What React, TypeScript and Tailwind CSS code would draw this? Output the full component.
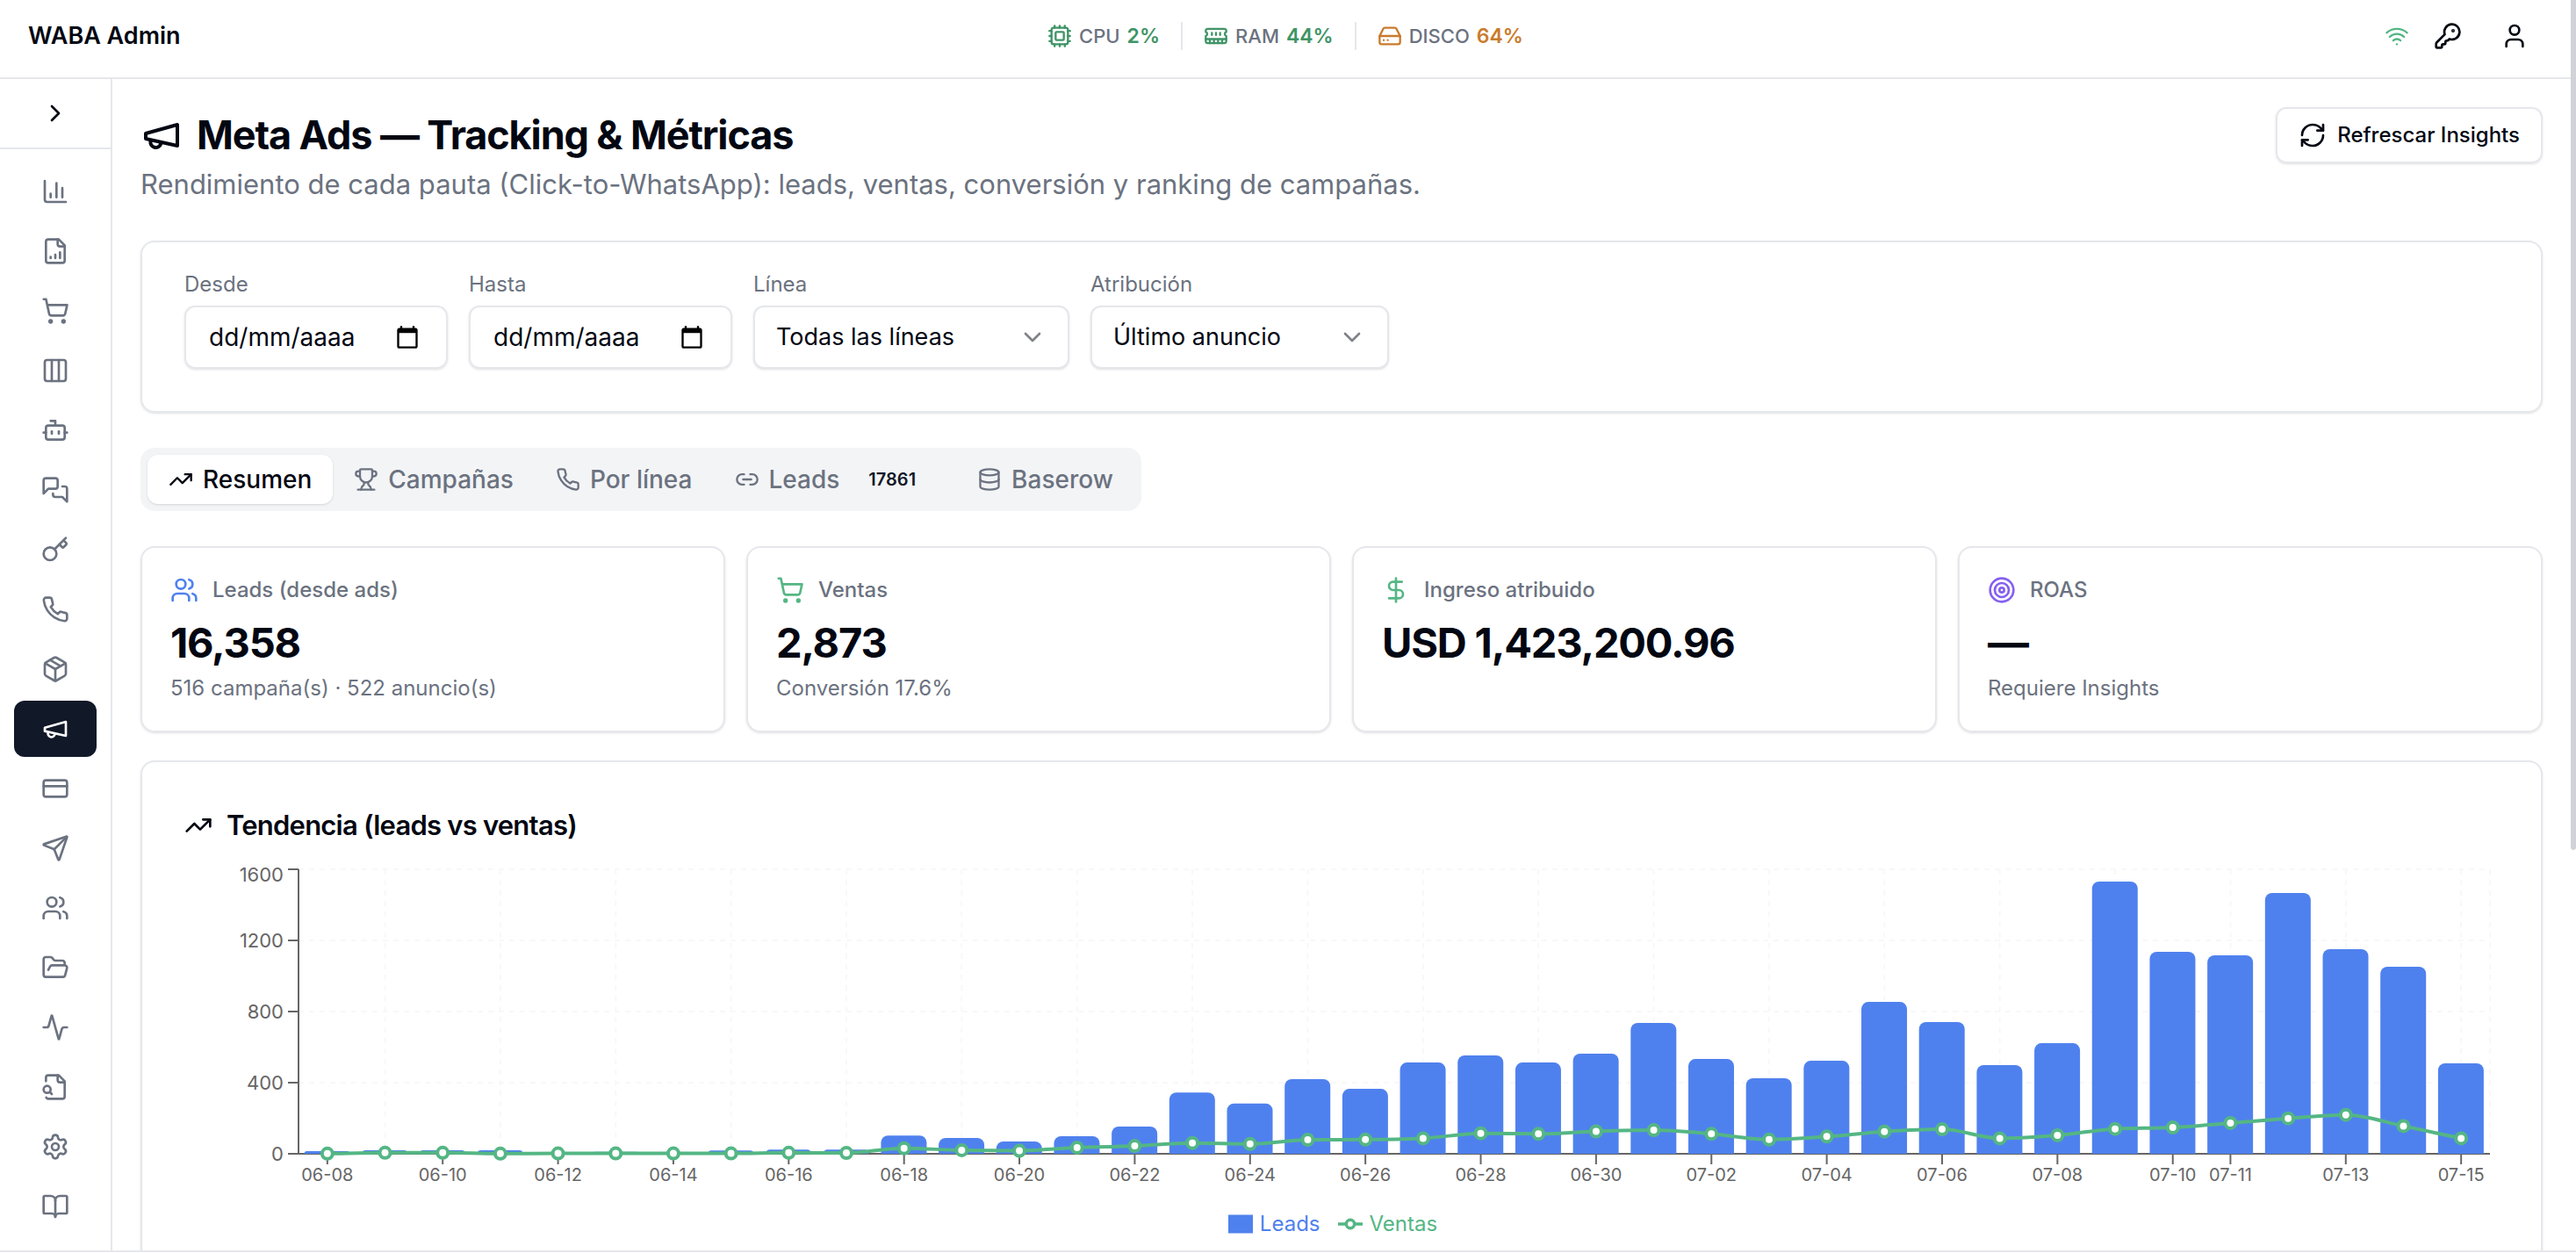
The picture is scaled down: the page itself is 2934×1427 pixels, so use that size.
import type { ComponentType, ReactNode } from "react";
import {
  Activity,
  BookOpen,
  Bot,
  ChartColumn,
  ChevronDown,
  ChevronRight,
  Columns3,
  Cpu,
  CreditCard,
  Database,
  DollarSign,
  FolderOpen,
  HardDrive,
  KeyRound,
  Link2,
  Package,
  RefreshCw,
  Send,
  Settings,
  ShoppingCart,
  Target,
  TrendingUp,
  Trophy,
  User,
  Users,
  Wifi,
} from "lucide-react";

type IconType = ComponentType<{ className?: string }>;

// iconos con trazo propio (24x24)
function Glyph({ className, children }: { className?: string; children: ReactNode }) {
  return (
    <svg
      viewBox="0 0 24 24"
      fill="none"
      stroke="currentColor"
      strokeWidth="2"
      strokeLinecap="round"
      strokeLinejoin="round"
      className={className}
      aria-hidden="true"
    >
      {children}
    </svg>
  );
}

const Megaphone: IconType = ({ className }) => (
  <Glyph className={className}>
    <path d="m3 11 18-5v12L3 14v-3z" />
    <path d="M11.6 16.8a3 3 0 1 1-5.8-1.6" />
  </Glyph>
);

const Key: IconType = ({ className }) => (
  <Glyph className={className}>
    <path d="m15.5 7.5 2.3 2.3a1 1 0 0 0 1.4 0l2.1-2.1a1 1 0 0 0 0-1.4L19 4" />
    <path d="m21 2-9.6 9.6" />
    <circle cx="7.5" cy="15.5" r="5.5" />
  </Glyph>
);

const MemoryStick: IconType = ({ className }) => (
  <Glyph className={className}>
    <path d="M6 19v-3M10 19v-3M14 19v-3M18 19v-3M8 11V9M16 11V9M12 11V9M2 15h20" />
    <path d="M2 7a2 2 0 0 1 2-2h16a2 2 0 0 1 2 2v1.1a2 2 0 0 0 0 3.837V17a2 2 0 0 1-2 2H4a2 2 0 0 1-2-2v-5.1a2 2 0 0 0 0-3.837Z" />
  </Glyph>
);

const Messages: IconType = ({ className }) => (
  <Glyph className={className}>
    <path d="M14 9a2 2 0 0 1-2 2H6l-4 4V4a2 2 0 0 1 2-2h8a2 2 0 0 1 2 2z" />
    <path d="M18 9h2a2 2 0 0 1 2 2v11l-4-4h-6a2 2 0 0 1-2-2v-1" />
  </Glyph>
);

const Phone: IconType = ({ className }) => (
  <Glyph className={className}>
    <path d="M22 16.92v3a2 2 0 0 1-2.18 2 19.79 19.79 0 0 1-8.63-3.07 19.5 19.5 0 0 1-6-6 19.79 19.79 0 0 1-3.07-8.67A2 2 0 0 1 4.11 2h3a2 2 0 0 1 2 1.72 12.84 12.84 0 0 0 .7 2.81 2 2 0 0 1-.45 2.11L8.09 9.91a16 16 0 0 0 6 6l1.27-1.27a2 2 0 0 1 2.11-.45 12.84 12.84 0 0 0 2.81.7A2 2 0 0 1 22 16.92z" />
  </Glyph>
);

const FileChart: IconType = ({ className }) => (
  <Glyph className={className}>
    <path d="M15 2H6a2 2 0 0 0-2 2v16a2 2 0 0 0 2 2h12a2 2 0 0 0 2-2V7Z" />
    <path d="M14 2v4a2 2 0 0 0 2 2h4M8 18v-1M12 18v-3M16 18v-5" />
  </Glyph>
);

const FileSearch: IconType = ({ className }) => (
  <Glyph className={className}>
    <path d="M14 2v4a2 2 0 0 0 2 2h4" />
    <path d="M4.268 21a2 2 0 0 0 1.727 1H18a2 2 0 0 0 2-2V7l-5-5H6a2 2 0 0 0-2 2v3" />
    <path d="m9 18-1.5-1.5" />
    <circle cx="5" cy="14" r="3" />
  </Glyph>
);

const CalendarPicker: IconType = ({ className }) => (
  <svg viewBox="0 0 24 24" className={className} fill="currentColor" aria-hidden="true">
    <path d="M20 3h-1V1h-2v2H7V1H5v2H4c-1.1 0-2 .9-2 2v16c0 1.1.9 2 2 2h16c1.1 0 2-.9 2-2V5c0-1.1-.9-2-2-2zm0 18H4V8h16v13z" />
  </svg>
);

const NAV: { label: string; icon: IconType }[] = [
  { label: "Dashboard", icon: ChartColumn },
  { label: "Reportes", icon: FileChart },
  { label: "Pedidos", icon: ShoppingCart },
  { label: "Kanban", icon: Columns3 },
  { label: "Bots", icon: Bot },
  { label: "Conversaciones", icon: Messages },
  { label: "Credenciales", icon: Key },
  { label: "Líneas", icon: Phone },
  { label: "Productos", icon: Package },
  { label: "Meta Ads", icon: Megaphone },
  { label: "Pagos", icon: CreditCard },
  { label: "Envíos", icon: Send },
  { label: "Usuarios", icon: Users },
  { label: "Archivos", icon: FolderOpen },
  { label: "Actividad", icon: Activity },
  { label: "Auditoría", icon: FileSearch },
  { label: "Ajustes", icon: Settings },
  { label: "Documentación", icon: BookOpen },
];

const STATS = [
  { label: "CPU", value: "2%", icon: Cpu, tone: "text-[#3f9467]" },
  { label: "RAM", value: "44%", icon: MemoryStick, tone: "text-[#3f9467]" },
  { label: "DISCO", value: "64%", icon: HardDrive, tone: "text-[#c97b2c]" },
];

const KPIS = [
  { label: "Leads (desde ads)", value: "16,358", note: "516 campaña(s) · 522 anuncio(s)", icon: Users, tone: "text-[#4f81ee]" },
  { label: "Ventas", value: "2,873", note: "Conversión 17.6%", icon: ShoppingCart, tone: "text-[#54b684]" },
  { label: "Ingreso atribuido", value: "USD 1,423,200.96", note: "", icon: DollarSign, tone: "text-[#54b684]" },
  { label: "ROAS", value: "—", note: "Requiere Insights", icon: Target, tone: "text-[#8560ee]" },
];

const DAYS = [
  "06-08", "06-09", "06-10", "06-11", "06-12", "06-13", "06-14", "06-15", "06-16", "06-17",
  "06-18", "06-19", "06-20", "06-21", "06-22", "06-23", "06-24", "06-25", "06-26", "06-27",
  "06-28", "06-29", "06-30", "07-01", "07-02", "07-03", "07-04", "07-05", "07-06", "07-07",
  "07-08", "07-09", "07-10", "07-11", "07-12", "07-13", "07-14", "07-15",
];
const LEADS = [
  15, 20, 20, 20, 10, 11, 10, 19, 24, 24, 103, 89, 69, 99, 153, 345, 283, 420, 365, 513, 553, 513,
  563, 736, 533, 425, 523, 854, 741, 499, 622, 1531, 1136, 1116, 1467, 1151, 1052, 509,
];
const SALES = [
  1, 6, 6, 1, 2, 2, 2, 2, 6, 5, 31, 20, 17, 35, 44, 61, 55, 79, 80, 87, 115, 112, 126, 133, 112,
  80, 97, 125, 138, 87, 104, 140, 148, 173, 199, 219, 156, 87,
];

// área del gráfico
const W = 2636;
const H = 398;
const LEFT = 130;
const RIGHT = 2626;
const TOP = 10;
const BASE = 334;
const MAX = 1600;
const STEP = (RIGHT - LEFT) / DAYS.length;

const xAt = (i: number) => LEFT + STEP * (i + 0.5);
const yAt = (v: number) => BASE - (v / MAX) * (BASE - TOP);

function barPath(i: number, v: number) {
  const x = LEFT + STEP * (i + 0.1);
  const y = yAt(v);
  const w = 52;
  const r = Math.min(8, BASE - y);
  return `M${x},${y + r}A${r},${r},0,0,1,${x + r},${y}H${x + w - r}A${r},${r},0,0,1,${x + w},${y + r}V${BASE}H${x}Z`;
}

// curva monótona en x
function monotone(points: [number, number][]) {
  const n = points.length;
  const slope = points
    .slice(1)
    .map((p, i) => (p[1] - points[i][1]) / (p[0] - points[i][0]));
  const tangent = points.map((_, i) => {
    if (i === 0) return slope[0];
    if (i === n - 1) return slope[n - 2];
    const a = slope[i - 1];
    const b = slope[i];
    if (a * b <= 0) return 0;
    return Math.sign(a) * Math.min(Math.abs(a), Math.abs(b), Math.abs(a + b) / 4) * 2;
  });
  let d = `M${points[0][0]},${points[0][1]}`;
  for (let i = 1; i < n; i++) {
    const [x0, y0] = points[i - 1];
    const [x1, y1] = points[i];
    const dx = (x1 - x0) / 3;
    d += `C${x0 + dx},${y0 + dx * tangent[i - 1]},${x1 - dx},${y1 - dx * tangent[i]},${x1},${y1}`;
  }
  return d;
}

function isLabelled(i: number) {
  return i <= 32 ? i % 2 === 0 : i % 2 === 1;
}

function TrendChart() {
  const line = monotone(SALES.map((v, i) => [xAt(i), yAt(v)]));
  return (
    <svg
      viewBox={`0 0 ${W} ${H}`}
      className="block w-full font-['Inter',sans-serif]"
      role="img"
      aria-label="Leads y ventas por día"
    >
      <g stroke="#f8f8f9" strokeWidth="2" strokeDasharray="6 6">
        {[400, 800, 1200, 1600].map((v) => (
          <line key={v} x1={LEFT} x2={RIGHT} y1={yAt(v)} y2={yAt(v)} />
        ))}
        {DAYS.map((d, i) =>
          i % 2 === 1 ? <line key={d} x1={xAt(i)} x2={xAt(i)} y1={TOP} y2={BASE} /> : null,
        )}
        <line x1={RIGHT} x2={RIGHT} y1={TOP} y2={BASE} />
      </g>

      <g stroke="#666" strokeWidth="2">
        <line x1={LEFT} x2={RIGHT} y1={BASE} y2={BASE} />
        <line x1={LEFT} x2={LEFT} y1={TOP} y2={BASE} />
        {[0, 400, 800, 1200, 1600].map((v) => (
          <line key={v} x1={LEFT - 12} x2={LEFT} y1={yAt(v)} y2={yAt(v)} />
        ))}
        {DAYS.map((d, i) =>
          isLabelled(i) ? <line key={d} x1={xAt(i)} x2={xAt(i)} y1={BASE} y2={BASE + 12} /> : null,
        )}
      </g>

      <g fill="#666" fontSize="22" textAnchor="end">
        {[0, 400, 800, 1200, 1600].map((v) => (
          <text key={v} x={LEFT - 17} y={(v === MAX ? 16 : yAt(v)) + 8}>
            {v}
          </text>
        ))}
      </g>
      <g fill="#666" fontSize="20" textAnchor="middle">
        {DAYS.map((d, i) =>
          isLabelled(i) ? (
            <text key={d} x={xAt(i)} y={BASE + 31}>
              {d}
            </text>
          ) : null,
        )}
      </g>

      <g fill="#4f81ee">
        {LEADS.map((v, i) => (
          <path key={DAYS[i]} d={barPath(i, v)} />
        ))}
      </g>
      <path d={line} fill="none" stroke="#54b684" strokeWidth="4" />
      <g fill="#fff" stroke="#54b684" strokeWidth="4">
        {SALES.map((v, i) => (
          <circle key={DAYS[i]} cx={xAt(i)} cy={yAt(v)} r="6" />
        ))}
      </g>
    </svg>
  );
}

function Header() {
  return (
    <header className="grid h-[90px] shrink-0 grid-cols-[1fr_auto_1fr] items-center border-b-2 border-[#e5e7eb] px-8 pb-1.5">
      <div className="text-[27px] font-semibold">WABA Admin</div>

      <div className="flex items-center gap-6 font-medium">
        {STATS.map(({ label, value, icon: Icon, tone }, i) => (
          <div key={label} className="flex items-center gap-6">
            {i > 0 && <span className="h-8 w-0.5 bg-[#e5e7eb]" />}
            <div className="flex items-center gap-2">
              <Icon className={`size-7 ${tone}`} />
              <span className="text-[22px] text-[#6b7280]">{label}</span>
              <span className={`text-[23px] font-semibold ${tone}`}>{value}</span>
            </div>
          </div>
        ))}
      </div>

      <div className="flex items-center justify-end gap-3">
        <Wifi className="size-7 text-[#54b684]" />
        <button type="button" aria-label="Cambiar contraseña" className="grid size-16 place-items-center">
          <KeyRound className="size-8" />
        </button>
        <button type="button" aria-label="Mi cuenta" className="grid size-16 place-items-center">
          <User className="size-8" />
        </button>
      </div>
    </header>
  );
}

function Sidebar() {
  return (
    <aside className="flex w-32 shrink-0 flex-col border-r-2 border-[#e5e7eb]">
      <div className="flex h-20 shrink-0 items-center justify-center border-b-2 border-[#e5e7eb]">
        <button type="button" aria-label="Expandir menú" className="p-3">
          <ChevronRight className="size-8" />
        </button>
      </div>
      <nav className="flex flex-col gap-1 p-4">
        {NAV.map(({ label, icon: Icon }) => (
          <a
            key={label}
            href="#"
            aria-label={label}
            className={`flex h-16 items-center justify-center rounded-xl ${
              label === "Meta Ads" ? "bg-[#111827] text-white" : "text-[#6b7280]"
            }`}
          >
            <Icon className="size-8" />
          </a>
        ))}
      </nav>
    </aside>
  );
}

function DateField({ id, label }: { id: string; label: string }) {
  return (
    <div className="flex w-[300px] flex-col gap-2">
      <label htmlFor={id} className="text-2xl text-[#6b7280]">
        {label}
      </label>
      <div className="flex h-[72px] items-center rounded-xl border-2 border-[#e5e7eb] px-6 shadow-sm">
        <input
          id={id}
          type="text"
          placeholder="dd/mm/aaaa"
          className="min-w-0 flex-1 bg-transparent px-0.5 text-[28px] text-[#030712] outline-none placeholder:text-[#030712]"
        />
        <CalendarPicker className="mr-1.5 size-7 shrink-0 text-black" />
      </div>
    </div>
  );
}

function SelectField({ id, label, option, width }: { id: string; label: string; option: string; width: string }) {
  return (
    <div className={`flex flex-col gap-2 ${width}`}>
      <label htmlFor={id} className="text-2xl text-[#6b7280]">
        {label}
      </label>
      <div className="relative">
        <select
          id={id}
          className="h-[72px] w-full appearance-none rounded-xl border-2 border-[#e5e7eb] bg-white px-6 text-[27px] text-[#030712] shadow-sm"
        >
          <option>{option}</option>
        </select>
        <ChevronDown className="pointer-events-none absolute top-5 right-[26px] size-8 opacity-50" />
      </div>
    </div>
  );
}

function Tab({ icon: Icon, active, children }: { icon: IconType; active?: boolean; children: ReactNode }) {
  return (
    <button
      type="button"
      role="tab"
      aria-selected={!!active}
      className={`flex h-14 items-center gap-[11px] rounded-xl px-6 text-[28px] font-medium ${
        active ? "bg-white text-[#030712] shadow" : "text-[#6b7280]"
      }`}
    >
      <Icon className="size-7" />
      {children}
    </button>
  );
}

export default function App() {
  return (
    <div className="flex h-screen flex-col overflow-hidden bg-white font-['Inter',sans-serif] text-[#030712]">
      <div className="flex min-h-0 flex-1">
        <div className="flex min-w-0 flex-1 flex-col">
          <Header />
          <div className="flex min-h-0 flex-1">
            <Sidebar />

            <main className="min-w-0 flex-1 overflow-hidden p-8">
              <div className="flex items-start justify-between">
                <div>
                  <h1 className="flex items-center gap-4 text-[45px] leading-[64px] font-bold tracking-tight">
                    <Megaphone className="size-12" />
                    Meta Ads — Tracking & Métricas
                  </h1>
                  <p className="text-[31px] leading-[48px] text-[#6b7280]">
                    Rendimiento de cada pauta (Click-to-WhatsApp): leads, ventas, conversión y ranking de campañas.
                  </p>
                </div>
                <button
                  type="button"
                  className="flex h-16 items-center gap-3 rounded-xl border-2 border-[#e5e7eb] px-6 text-2xl font-medium shadow-sm"
                >
                  <RefreshCw className="size-8" />
                  Refrescar Insights
                </button>
              </div>

              <section className="mt-10 flex gap-6 rounded-2xl border-2 border-[#e5e7eb] px-12 pt-8 pb-12 shadow-sm">
                <DateField id="desde" label="Desde" />
                <DateField id="hasta" label="Hasta" />
                <SelectField id="linea" label="Línea" option="Todas las líneas" width="w-[360px]" />
                <SelectField id="atribucion" label="Atribución" option="Último anuncio" width="w-[340px]" />
              </section>

              <div role="tablist" className="mt-10 flex w-fit rounded-2xl bg-[#f3f4f6] p-2">
                <Tab icon={TrendingUp} active>
                  Resumen
                </Tab>
                <Tab icon={Trophy}>Campañas</Tab>
                <Tab icon={Phone}>Por línea</Tab>
                <Tab icon={Link2}>
                  Leads
                  <span className="rounded-lg border-2 border-transparent px-5 text-xl font-semibold text-[#111827]">
                    17861
                  </span>
                </Tab>
                <Tab icon={Database}>Baserow</Tab>
              </div>

              <div className="mt-10 grid grid-cols-4 gap-6">
                {KPIS.map(({ label, value, note, icon: Icon, tone }) => (
                  <article key={label} className="rounded-2xl border-2 border-[#e5e7eb] p-8 shadow-sm">
                    <div className="flex items-center gap-4 text-2xl font-medium text-[#6b7280]">
                      <Icon className={`size-8 ${tone}`} />
                      {label}
                    </div>
                    <div className="mt-3 text-[47px] leading-[64px] font-bold tracking-tight">{value}</div>
                    {note && <div className="mt-1 text-2xl text-[#6b7280]">{note}</div>}
                  </article>
                ))}
              </div>

              <section className="mt-8 rounded-2xl border-2 border-[#e5e7eb] p-12 shadow-sm">
                <h2 className="flex items-center gap-4 text-[31px] leading-[48px] font-semibold tracking-tight">
                  <TrendingUp className="size-8" />
                  Tendencia (leads vs ventas)
                </h2>
                <div className="mt-4">
                  <TrendChart />
                  <ul className="flex justify-center text-2xl">
                    <li className="mr-5 flex items-center gap-2 text-[#4f81ee]">
                      <svg viewBox="0 0 32 32" className="size-7" aria-hidden="true">
                        <path d="M0,4h32v24h-32z" fill="currentColor" />
                      </svg>
                      Leads
                    </li>
                    <li className="mr-5 flex items-center gap-2 text-[#54b684]">
                      <svg viewBox="0 0 32 32" className="size-7" fill="none" stroke="currentColor" strokeWidth="4" aria-hidden="true">
                        <path d="M0,16h10.667A5.333,5.333,0,1,1,21.333,16H32M21.333,16A5.333,5.333,0,1,1,10.667,16" />
                      </svg>
                      Ventas
                    </li>
                  </ul>
                </div>
              </section>
            </main>
          </div>
        </div>
        <div className="w-1.5 shrink-0">
          <div className="h-[68%] rounded-b-full bg-[#d1d3d8]" />
        </div>
      </div>
      <div className="h-[3px] shrink-0 border-t-2 border-[#e5e7eb]" />
    </div>
  );
}
